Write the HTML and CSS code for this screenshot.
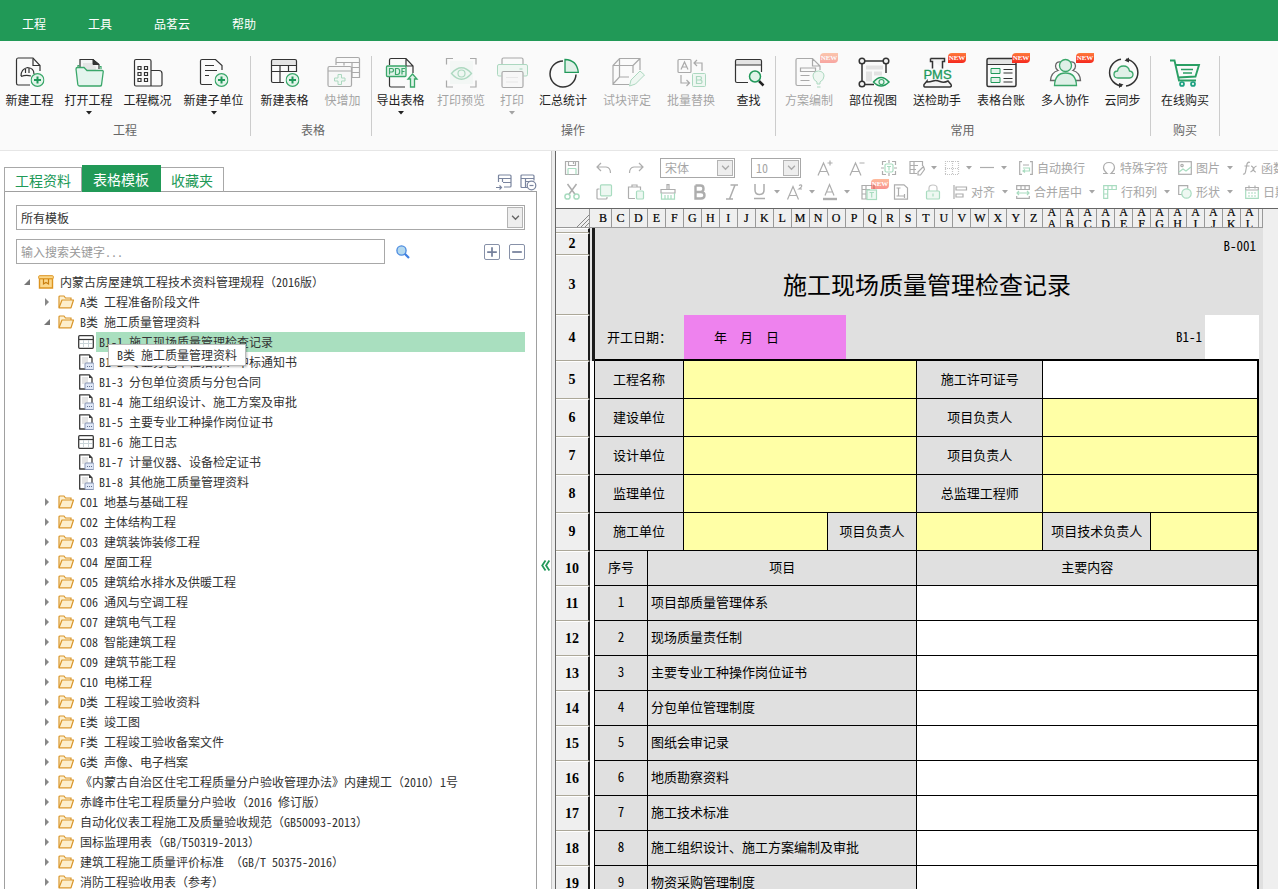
FILE: index.html
```html
<!DOCTYPE html>
<html lang="zh-CN">
<head>
<meta charset="utf-8">
<title>施工现场质量管理检查记录</title>
<link rel="stylesheet" href="styles.css">
</head>
<body>
<svg class="defs" aria-hidden="true">
  <symbol id="plus" viewBox="0 0 14 14"><circle cx="7" cy="7" r="6.400" fill="#e3f4ea" stroke="#3aa76a" stroke-width="1.2"/><path d="M7 3.500v7M3.500 7h7" stroke="#21995a" stroke-width="2"/></symbol>
  <symbol id="down" viewBox="0 0 6 4"><path d="M0 0h6L3 3.500z" fill="currentColor"/></symbol>
  <symbol id="chev" viewBox="0 0 10 7"><path d="M1 1l4 4 4-4" fill="none" stroke="currentColor" stroke-width="1.6"/></symbol>
  <symbol id="opened" viewBox="0 0 8 8"><path d="M7 1v6H1z" fill="#777"/></symbol>
  <symbol id="closed" viewBox="0 0 8 8"><path d="M2 0l4 4-4 4z" fill="#888"/></symbol>
  <symbol id="folder" viewBox="0 0 16 14"><path d="M1 12.500V2q0-1 1-1h4l1.500 2H13v2" fill="#fdf0d0" stroke="#d9962b" stroke-width="1.2"/><path d="M1 12.800L4 5h11.500L13 12.800z" fill="#fdeecb" stroke="#d9962b" stroke-width="1.2" stroke-linejoin="round"/></symbol>
  <symbol id="box" viewBox="0 0 16 14"><path d="M1.500 3.500h13V13h-13z" fill="#fbd88c" stroke="#dd9420" stroke-width="1.400"/><rect x=".7" y=".7" width="14.600" height="3" rx=".8" fill="#fbd88c" stroke="#dd9420"/><path d="M5.500 4v5L8 7.500l2.500 1.500V4" fill="none" stroke="#c97f10" stroke-width="1.200"/></symbol>
  <symbol id="doc" viewBox="0 0 16 16"><path d="M1.700.8H11L14 4v11H1.700z" fill="#fff" stroke="#3a3a3a" stroke-width="1.300" stroke-linejoin="round"/><path d="M4 3h6v7H4z" fill="#e4e4e4"/><path d="M11 .8V4h3z" fill="#3a3a3a"/><rect x="7" y="9" width="9" height="6.500" rx="1" fill="#dfe7f5" stroke="#8795b5"/><path d="M9 12.500h1m1 0h1m1 0h1" stroke="#5f6f94" stroke-width="1.200"/></symbol>
  <symbol id="form" viewBox="0 0 16 14"><rect x=".7" y=".7" width="14.600" height="12.600" rx="1" fill="#fff" stroke="#3a3a3a" stroke-width="1.300"/><path d="M1 4.500h14" stroke="#3a3a3a" stroke-width="1.200"/><path d="M2 8.500h12M5.500 5v7.500M10.500 5v7.500" stroke="#c9d4d8"/></symbol>
</svg>
<div class="app">
  <header class="menubar">
    <nav class="menu"><a href="#">工程</a><a href="#">工具</a><a href="#">品茗云</a><a href="#">帮助</a></nav>
  </header>

  <div class="ribbon">
    <section class="group g1">
      <div class="btns">
        <button class="rb compact"><svg viewBox="0 0 32 32"><path d="M26 15V9.500L19 2H4Q2.500 2 2.500 4v23q0 2 1.500 2h12" class="k"/><path d="M19 2.500V9.500h7" class="k"/><path d="M7 20q0-7 6.500-8.500Q20 12 20 18M7 20.500q5-2 10-.5M11.500 12v5M15 12v5" class="k"/><use href="#plus" x="16.500" y="17" width="14" height="14"/></svg><span>新建工程</span></button>
        <button class="rb compact"><svg viewBox="0 0 32 32"><path d="M7 12V3.500h13L26 8.500V13" class="k" fill="#fff"/><path d="M10 7h9l4 4v4H10z" fill="#e4e4e4"/><path d="M20 3.500v5h6z" fill="#333" stroke="#333"/><path d="M5 12V9.500h1.500M26.500 10.500H28V13" class="g"/><path d="M3 13q0-1.500 1.500-1.500H11l3 3h15q1.500 0 1.200 1.500L28.500 29q-.2 1-1.500 1H6.500Q5 30 4.800 28.500z" fill="#e4f5ee" stroke="#3aa76a" stroke-width="1.300"/></svg><span>打开工程</span><svg class="dn"><use href="#down"/></svg></button>
        <button class="rb compact"><svg viewBox="0 0 32 32"><path d="M2.500 5q0-1.500 1.500-1.500h13.500q1.500 0 1.500 1.500v25H4q-1.500 0-1.500-1.500zM19 14.500h8q3 0 3 3v11q0 1.500-1.500 1.500H19" class="k"/><path d="M6 10.500h3v3H6zM12.500 10.500h3v3h-3zM6 16.500h3v3H6zM12.500 16.500h3v3h-3zM6 22.500h3v3H6zM12.500 22.500h3v3h-3z" class="k"/></svg><span>工程概况</span></button>
        <button class="rb w5"><svg viewBox="0 0 32 32"><path d="M14 28.500H4q-1.500 0-1.500-1.500V5q0-1.500 1.500-1.500h13.500l6.500 6V14M7 9.500h9M7 14.500h12M7 19.500h4" class="k"/><use href="#plus" x="16.500" y="17" width="14" height="14"/></svg><span>新建子单位</span><svg class="dn"><use href="#down"/></svg></button>
      </div><h2>工程</h2>
    </section>
    <section class="group g2">
      <div class="btns">
        <button class="rb compact"><svg viewBox="0 0 32 32"><path d="M3 4h24v5H3z" fill="#e4e4e4"/><path d="M15 26.500H4q-1.500 0-1.500-1.500V5q0-1.500 1.500-1.500h22q1.500 0 1.500 1.500v11M2.500 9.500h25M2.500 15.500h25M11 9.500v17M19.500 9.500v6" class="k"/><use href="#plus" x="16.500" y="17" width="14" height="14"/></svg><span>新建表格</span></button>
        <button class="rb w4" disabled><svg viewBox="0 0 32 32"><path d="M9 9V3q0-1.500 1.500-1.500H31q1.500 0 1.500 1.500v18.500H25M9 6.500h23M25 11.500h7M25 16.500h7M17 6.500v3M25 6.500v15" class="k"/><path d="M1 12q0-1.500 1.500-1.500H23q1.500 0 1.500 1.500v17q0 1.500-1.500 1.500H2.500Q1 30.500 1 29zM1 15h23" class="k" fill="#fff"/><path d="M11 18.500h3.500V22H18v3h-3.500v3.500H11V25H7.500v-3H11z" fill="#dff3e8" stroke="#3aa76a"/></svg><span>快增加</span></button>
      </div><h2>表格</h2>
    </section>
    <section class="group g3">
      <div class="btns">
        <button class="rb w4"><svg viewBox="0 0 32 32"><path d="M4.500 9V4q0-1.500 1.500-1.500h15L28 10v7M4.500 21v8.500q0 1.500 1.500 1.500h14M21 2.500V10h7" class="k"/><rect x="1.500" y="10" width="19.500" height="10.500" rx="1" fill="#dff3e8" stroke="#3aa76a" stroke-width="1.300"/><path d="M4.500 18.500v-6H7q1.500 0 1.500 1.700T7 16H4.500M10.500 12.500h2q2.200 0 2.200 3t-2.200 3h-2zM17 18.500v-6h3M17 15.500h2.500" class="g"/><path d="M27.500 18l4.500 5h-2.500v8h-4v-8H23z" fill="#dff3e8" stroke="#3aa76a" stroke-width="1.300"/></svg><span>导出表格</span><svg class="dn"><use href="#down"/></svg></button>
        <button class="rb" disabled><svg viewBox="0 0 32 32"><path d="M5 5h23v23H5z" fill="#e9f4ee"/><path d="M1.500 8.500v-6H8M25 2.500h6v6M31 24.500V31h-6M8 31H1.500v-6.500" class="k"/><path d="M6.500 17.500Q16.500 6 26.500 17.500 16.500 29 6.500 17.500z" fill="#dff3e8" stroke="#3aa76a" stroke-width="1.300"/><circle cx="16.500" cy="17.500" r="3.500" class="g"/></svg><span>打印预览</span></button>
        <button class="rb w2" disabled><svg viewBox="0 0 32 32"><path d="M6 9V3.500Q6 2 7.500 2h18Q27 2 27 3.500V9" class="k"/><path d="M5.500 20H3q-1.500 0-1.500-1.500V10Q1.500 8.500 3 8.500h27q1.500 0 1.500 1.500v8.500Q31.500 20 30 20h-2.500" fill="#dff3e8" stroke="#3aa76a"/><path d="M23.500 13h3" class="g"/><path d="M6 17q0-1.500 1.500-1.500h18q1.500 0 1.500 1.500v13q0 1.500-1.500 1.500h-18Q6 31.500 6 30z" class="k" fill="#fff"/><path d="M10 21.500h12M10 26h12" stroke="#ccc"/></svg><span>打印</span><svg class="dn"><use href="#down"/></svg></button>
        <button class="rb"><svg viewBox="0 0 32 32"><path d="M16 5A13 13 0 1 0 29 18.500" class="k m"/><path d="M18 3.500Q30 4 31.300 16.300H18z" fill="#dff0e7" stroke="#21995a" stroke-width="1.300"/></svg><span>汇总统计</span></button>
        <button class="rb" disabled><svg viewBox="0 0 32 32"><path d="M18 28.500H2V9.500L8.500 2.500H29V14M2 9.500h20V17M22 9.500L29 2.500M8.500 2.500V21L2 28M8.500 21H18" class="k"/><path d="M18.500 30l1.500-6 9-9 4.500 4-9 9z" fill="#dff3e8" stroke="#3aa76a"/></svg><span>试块评定</span></button>
        <button class="rb" disabled><svg viewBox="0 0 32 32"><rect x="3" y="3.500" width="13" height="13" rx="1" class="k"/><path d="M6 13.500L9.500 6l3.500 7.500M7 11h5" class="k"/><rect x="17.500" y="17.500" width="13" height="13" rx="1" fill="#dff3e8" stroke="#3aa76a"/><path d="M21.500 27.500v-7h3q2 0 2 1.700T24.500 24h-3 3.500q2 0 2 1.800t-2 1.700z" class="g"/><path d="M19 7h8v8M22 4l-3 3 3 3M6 19v8h8M11.500 24l3 3-3 3" class="k"/></svg><span>批量替换</span></button>
        <button class="rb w3"><svg viewBox="0 0 32 32"><path d="M3 4h25v5H3z" fill="#e4e4e4"/><path d="M15 26.500H4q-1.500 0-1.500-1.500V5q0-1.500 1.500-1.500h23q1.500 0 1.500 1.500v11M2.500 9h26" class="k"/><path d="M26 25l4.500 4.500" stroke="#222" stroke-width="2.500"/><circle cx="22" cy="20.500" r="5.500" fill="#dff3e8" stroke="#21995a" stroke-width="1.500"/></svg><span>查找</span></button>
      </div><h2>操作</h2>
    </section>
    <section class="group g4">
      <div class="btns">
        <button class="rb" disabled><svg viewBox="0 0 32 32"><path d="M18 29.500H4.500Q3 29.500 3 28V4q0-1.500 1.500-1.500h15L27 10v4M19.500 2.500V10H27M7.500 12h15v3.500h-15zM7.500 19.500h9M7.500 24.500h9" class="k"/><path d="M24 28v-2q-4-2-4-6 0-4.500 5.500-5 5.500.5 5.500 5 0 4-4 6v2zM24 31h3.500" fill="#dff3e8" stroke="#3aa76a"/></svg><span>方案编制</span><b class="new">NEW</b></button>
        <button class="rb"><svg viewBox="0 0 32 32"><path d="M9 9.500h17v4H9zM9 15.500h6v10H9zM17 15.500h8v4h-8z" fill="#e2e2e2"/><path d="M8 5h18M5 8v17M8 28.500h9M29 8v9" class="k m"/><g class="k m" fill="#e4e4e4"><circle cx="5" cy="5" r="2.800"/><circle cx="29" cy="5" r="2.800"/><circle cx="5" cy="28" r="2.800"/></g><path d="M16.500 26q7.500-9 15.500 0-8 8-15.500 0z" fill="#eaf7f0" stroke="#21995a" stroke-width="1.500"/><circle cx="24.500" cy="26" r="2.500" class="g"/></svg><span>部位视图</span></button>
        <button class="rb"><svg viewBox="0 0 32 32"><path d="M9.500 2.500h14v3h-2v7M9.500 2.500v3h2v7M6 25l-3 3.500q-.5 2.500 1 2.500h25q2-.500 1-2.500L27 25q-4 2-8 .5T12 25q-3 1-6 1z" class="k m" fill="#e6e6e6"/><text x="16.500" y="23" text-anchor="middle" class="pms">PMS</text></svg><span>送检助手</span><b class="new">NEW</b></button>
        <button class="rb"><svg viewBox="0 0 32 32"><path d="M2 3h29v5H2z" fill="#e4e4e4"/><rect x="2" y="2.500" width="29" height="28" rx="1.500" class="k m"/><path d="M2 8.500h29M18.500 13.500h9M18.500 17h9M18.500 22.500h9M18.500 26h9" class="k"/><path d="M6 12.500h9v5H6zM6 21.500h9v5H6z" fill="#e3f4ea" stroke="#21995a"/></svg><span>表格台账</span><b class="new">NEW</b></button>
        <button class="rb"><svg viewBox="0 0 32 32"><path d="M12 6q-5-1-5.500 4 0 3 2.500 4.500-7 2-7.500 10H7M21 6q5-1 5.500 4 0 3-2.500 4.500 7 2 7.500 10H26" fill="none" stroke="#666" stroke-width="1.300"/><circle cx="16.500" cy="9.500" r="6" fill="#dff0e7" stroke="#3aa76a" stroke-width="1.300"/><path d="M5.500 29.500Q6 17 16.500 17t11 12.500z" fill="#dff0e7" stroke="#3aa76a" stroke-width="1.300"/></svg><span>多人协作</span><b class="new">NEW</b></button>
        <button class="rb w3"><svg viewBox="0 0 32 32"><path d="M14 3.200A13.500 13.500 0 0 0 15 30M19 30A13.500 13.500 0 0 0 19 3.200" class="k m"/><path d="M17.500 4.500L22 1.500v5zM16.500 28.500L12 27v5z" fill="#333"/><path d="M11 22q-4 0-4-3.500T10.500 15q1-5 6-5t6 5q3.500.5 3.500 3.500T22.500 22z" fill="#dff0e7" stroke="#3aa76a" stroke-width="1.300"/></svg><span>云同步</span></button>
      </div><h2>常用</h2>
    </section>
    <section class="group g5">
      <div class="btns">
        <button class="rb"><svg viewBox="0 0 32 32"><path d="M1 4.500h4.500L10 24.500h17M6.500 9H30l-3.500 11.500-17.500 1" fill="none" stroke="#2a9f64" stroke-width="1.900"/><path d="M12 13.500h12M14 17h9" stroke="#2a9f64" stroke-width="1.500"/><g fill="#dff3e8" stroke="#1a9f80" stroke-width="1.700"><circle cx="13" cy="28" r="2"/><circle cx="24" cy="28" r="2"/></g></svg><span>在线购买</span></button>
      </div><h2>购买</h2>
    </section>
  </div>

  <main class="work">
    <aside class="side">
      <div class="tabs">
        <button class="tab">工程资料</button><button class="tab on">表格模板</button><button class="tab">收藏夹</button>
        <div class="tabtools">
          <button aria-label="导入"><svg viewBox="0 0 17 17"><path d="M3.500 8V2q0-1 1-1H15q1 0 1 1v10q0 1-1 1H9M3.500 4.500H16M8 8.500h8M7.500 4.500v3.500M1 13.500h5.500M4.500 11.500l2 2-2 2" class="s"/></svg></button>
          <button aria-label="移除"><svg viewBox="0 0 17 17"><path d="M7 13.500H2q-1 0-1-1V2q0-1 1-1h11q1 0 1 1v4.500M1 4.500h13M5.500 4.500v9M5.500 7.500H9" class="s"/><circle cx="11.500" cy="11.500" r="4.300" class="s"/><path d="M9.500 11.500h4" class="s"/></svg></button>
        </div>
      </div>
      <div class="panel">
        <div class="combo big"><select aria-label="模板"><option>所有模板</option></select><span class="drop"><svg viewBox="0 0 10 7"><use href="#chev"/></svg></span></div>
        <div class="search">
          <input type="text" aria-label="搜索" placeholder="输入搜索关键字...">
          <button class="find" aria-label="查询"><svg viewBox="0 0 14 14"><path d="M8.500 8.500l4.500 4.500" stroke="#3f7fe0" stroke-width="2.200"/><circle cx="5.500" cy="5.500" r="4.600" fill="#b5d9ee" stroke="#4a8ae0" stroke-width="1.300"/></svg></button>
          <button class="pm" aria-label="展开"><svg viewBox="0 0 16 16"><path d="M8 2.500v11M2.500 8h11" stroke="#76819c" stroke-width="2"/></svg></button>
          <button class="pm" aria-label="折叠"><svg viewBox="0 0 16 16"><path d="M2.500 8h11" stroke="#76819c" stroke-width="2"/></svg></button>
        </div>
        <ul class="tree">
          <li><div class="row"><svg class="ar"><use href="#opened"/></svg><svg class="ic"><use href="#box"/></svg><span>内蒙古房屋建筑工程技术资料管理规程<i class="f">（</i>2016版<i class="f">）</i></span></div>
          <ul>
            <li><div class="row"><svg class="ar"><use href="#closed"/></svg><svg class="ic"><use href="#folder"/></svg><span>A类 工程准备阶段文件</span></div></li>
            <li class="hint"><div class="row"><svg class="ar"><use href="#opened"/></svg><svg class="ic"><use href="#folder"/></svg><span>B类 施工质量管理资料</span></div>
              <div class="tip" role="tooltip">B类 施工质量管理资料</div>
              <ul>
                <li><div class="row leaf sel"><svg class="ic"><use href="#form"/></svg><span><i>B1-1</i>施工现场质量管理检查记录</span></div></li>
                <li><div class="row leaf"><svg class="ic"><use href="#doc"/></svg><span><i>B1-2</i>专业分包单位招标、中标通知书</span></div></li>
                <li><div class="row leaf"><svg class="ic"><use href="#doc"/></svg><span><i>B1-3</i>分包单位资质与分包合同</span></div></li>
                <li><div class="row leaf"><svg class="ic"><use href="#doc"/></svg><span><i>B1-4</i>施工组织设计、施工方案及审批</span></div></li>
                <li><div class="row leaf"><svg class="ic"><use href="#doc"/></svg><span><i>B1-5</i>主要专业工种操作岗位证书</span></div></li>
                <li><div class="row leaf"><svg class="ic"><use href="#form"/></svg><span><i>B1-6</i>施工日志</span></div></li>
                <li><div class="row leaf"><svg class="ic"><use href="#doc"/></svg><span><i>B1-7</i>计量仪器、设备检定证书</span></div></li>
                <li><div class="row leaf"><svg class="ic"><use href="#doc"/></svg><span><i>B1-8</i>其他施工质量管理资料</span></div></li>
              </ul></li>
            <li><div class="row"><svg class="ar"><use href="#closed"/></svg><svg class="ic"><use href="#folder"/></svg><span><i class="c">C01</i>地基与基础工程</span></div></li>
            <li><div class="row"><svg class="ar"><use href="#closed"/></svg><svg class="ic"><use href="#folder"/></svg><span><i class="c">C02</i>主体结构工程</span></div></li>
            <li><div class="row"><svg class="ar"><use href="#closed"/></svg><svg class="ic"><use href="#folder"/></svg><span><i class="c">C03</i>建筑装饰装修工程</span></div></li>
            <li><div class="row"><svg class="ar"><use href="#closed"/></svg><svg class="ic"><use href="#folder"/></svg><span><i class="c">C04</i>屋面工程</span></div></li>
            <li><div class="row"><svg class="ar"><use href="#closed"/></svg><svg class="ic"><use href="#folder"/></svg><span><i class="c">C05</i>建筑给水排水及供暖工程</span></div></li>
            <li><div class="row"><svg class="ar"><use href="#closed"/></svg><svg class="ic"><use href="#folder"/></svg><span><i class="c">C06</i>通风与空调工程</span></div></li>
            <li><div class="row"><svg class="ar"><use href="#closed"/></svg><svg class="ic"><use href="#folder"/></svg><span><i class="c">C07</i>建筑电气工程</span></div></li>
            <li><div class="row"><svg class="ar"><use href="#closed"/></svg><svg class="ic"><use href="#folder"/></svg><span><i class="c">C08</i>智能建筑工程</span></div></li>
            <li><div class="row"><svg class="ar"><use href="#closed"/></svg><svg class="ic"><use href="#folder"/></svg><span><i class="c">C09</i>建筑节能工程</span></div></li>
            <li><div class="row"><svg class="ar"><use href="#closed"/></svg><svg class="ic"><use href="#folder"/></svg><span><i class="c">C10</i>电梯工程</span></div></li>
            <li><div class="row"><svg class="ar"><use href="#closed"/></svg><svg class="ic"><use href="#folder"/></svg><span>D类 工程竣工验收资料</span></div></li>
            <li><div class="row"><svg class="ar"><use href="#closed"/></svg><svg class="ic"><use href="#folder"/></svg><span>E类 竣工图</span></div></li>
            <li><div class="row"><svg class="ar"><use href="#closed"/></svg><svg class="ic"><use href="#folder"/></svg><span>F类 工程竣工验收备案文件</span></div></li>
            <li><div class="row"><svg class="ar"><use href="#closed"/></svg><svg class="ic"><use href="#folder"/></svg><span>G类 声像、电子档案</span></div></li>
            <li><div class="row"><svg class="ar"><use href="#closed"/></svg><svg class="ic"><use href="#folder"/></svg><span>《内蒙古自治区住宅工程质量分户验收管理办法》内建规工<i class="f">（</i>2010<i class="f">）</i>1号</span></div></li>
            <li><div class="row"><svg class="ar"><use href="#closed"/></svg><svg class="ic"><use href="#folder"/></svg><span>赤峰市住宅工程质量分户验收<i class="f">（</i>2016 修订版<i class="f">）</i></span></div></li>
            <li><div class="row"><svg class="ar"><use href="#closed"/></svg><svg class="ic"><use href="#folder"/></svg><span>自动化仪表工程施工及质量验收规范<i class="f">（</i>GB50093-2013<i class="f">）</i></span></div></li>
            <li><div class="row"><svg class="ar"><use href="#closed"/></svg><svg class="ic"><use href="#folder"/></svg><span>国标监理用表<i class="f">（</i>GB/T50319-2013<i class="f">）</i></span></div></li>
            <li><div class="row"><svg class="ar"><use href="#closed"/></svg><svg class="ic"><use href="#folder"/></svg><span>建筑工程施工质量评价标准 <i class="f">（</i>GB/T 50375-2016<i class="f">）</i></span></div></li>
            <li><div class="row"><svg class="ar"><use href="#closed"/></svg><svg class="ic"><use href="#folder"/></svg><span>消防工程验收用表<i class="f">（</i>参考<i class="f">）</i></span></div></li>
          </ul></li>
        </ul>
      </div>
    </aside>
    <div class="splitter"><button aria-label="收起"><svg viewBox="0 0 8 10"><path d="M4 .5L1 5l3 4.500M7.500.5l-3 4.500 3 4.500" fill="none" stroke="#21995a" stroke-width="1.600"/></svg></button></div>

    <section class="editor">
      <div class="tools">
        <div class="line">
          <button class="t" aria-label="保存"><svg viewBox="0 0 16 16"><path d="M1.500 1.500h13v13h-13zM4.500 1.500v4h7v-4M9.500 2v2" class="d"/><path d="M4 14.500V9q0-.5.500-.5h7q.5 0 .5.500v5.500" class="e"/></svg></button>
          <button class="t" aria-label="撤销"><svg viewBox="0 0 16 16"><path d="M5 3L1 7l4 4M1.500 7H10q4.500.5 4.500 6" class="d"/></svg></button>
          <button class="t" aria-label="重做"><svg viewBox="0 0 16 16"><path d="M11 3l4 4-4 4M14.500 7H6q-4.500.5-4.500 6" class="d"/></svg></button>
          <div class="combo font"><select aria-label="字体"><option>宋体</option></select><span class="drop"><svg viewBox="0 0 10 7"><use href="#chev"/></svg></span></div>
          <div class="combo size"><select aria-label="字号"><option>10</option></select><span class="drop"><svg viewBox="0 0 10 7"><use href="#chev"/></svg></span></div>
          <button class="t" aria-label="增大字号"><svg viewBox="0 0 16 16"><path d="M1 15.500L6.500 3 12 15.500M3 11.500h7M13 .5v5M10.500 3h5" class="d"/></svg></button>
          <button class="t" aria-label="减小字号"><svg viewBox="0 0 16 16"><path d="M1 15.500L6.500 3 12 15.500M3 11.500h7M10.500 3h5" class="d"/></svg></button>
          <button class="t" aria-label="适应"><svg viewBox="0 0 16 16"><path d="M1.500 5V1.500H5M11 1.500h3.500V5M14.500 11v3.500H11M5 14.500H1.500V11M8 0v3M8 13v3M0 8h3M13 8h3" class="d"/><rect x="4" y="4" width="8" height="8" rx="1.500" class="e"/><path d="M6 6.500h4M8 6.500v4" class="e"/></svg></button>
          <button class="t dd" aria-label="边框画笔"><svg viewBox="0 0 16 16"><path d="M8 13.500H1v-12h12.500V6M1 5.500h8M1 9.500h6M5 1.500v12M14.500 6.500L9 12v3h2.500l4-5.500z" class="d"/></svg><svg class="dn"><use href="#down"/></svg></button>
          <button class="t dd" aria-label="边框"><svg viewBox="0 0 16 16"><path d="M1 1.500h14M1 8.500h14M1 14.500h14M1.500 1v14M8.500 1v14M14.500 1v14" class="d pale" stroke-dasharray="1 1"/></svg><svg class="dn"><use href="#down"/></svg></button>
          <button class="t dd" aria-label="线型"><svg viewBox="0 0 16 16"><path d="M1 7.500h14" class="d"/></svg><svg class="dn"><use href="#down"/></svg></button>
          <button class="t tx wide"><svg viewBox="0 0 14 14"><path d="M3 .7H.7v12.600H3M11 .7h2.300v12.600H11M4 4h6" class="d"/><path d="M4 7h6.500v3H4M6 8.500L4 10l2 1.500" class="e"/></svg>自动换行</button>
          <button class="t tx wide"><svg viewBox="0 0 14 14"><path d="M1 12.500h4Q1.500 9.500 1.500 6.500 2 1.500 7 1.500t5.500 5q0 3-3.500 6h4" class="d"/></svg>特殊字符</button>
          <button class="t tx wide"><svg viewBox="0 0 14 14"><rect x=".7" y=".7" width="12.600" height="12.600" class="d"/><circle cx="4" cy="4.500" r="1.200" class="d"/><path d="M1 11l4-3 3 2 5-4" class="e"/></svg>图片<svg class="dn"><use href="#down"/></svg></button>
          <button class="t tx wide"><svg viewBox="0 0 14 14"><path d="M0 13q2 .5 2.500-2L4 3Q5 .5 7 1.500M1.500 5h5M8 5q2 0 2.500 3T13 11M13.500 5Q11 6 10.500 8T7.500 11" class="d"/></svg>函数</button>
        </div>
        <div class="line">
          <button class="t" aria-label="剪切"><svg viewBox="0 0 16 16"><path d="M3.500 0l8 11M12.500 0l-8 11" class="d m"/><circle cx="3.500" cy="12.500" r="2.600" class="e m"/><circle cx="12.500" cy="12.500" r="2.600" class="e m"/></svg></button>
          <button class="t" aria-label="复制"><svg viewBox="0 0 16 16"><path d="M3.500 5H2Q1 5 1 6v8q0 1 1 1h8q1 0 1-1v-1" class="d"/><rect x="4.500" y=".8" width="11" height="11" rx="1" class="e tint"/></svg></button>
          <button class="t" aria-label="粘贴"><svg viewBox="0 0 16 16"><path d="M7 14.500H1q-.5 0-.5-.5V3h12v3M4 3V1h5v2" class="d"/><rect x="8.500" y="7" width="7" height="8" rx="1" class="e tint"/></svg></button>
          <button class="t" aria-label="格式刷"><svg viewBox="0 0 16 16"><path d="M7 5V.7h2V5M1 9V5.500h14V9z" class="d"/><path d="M1.500 9v6.200h13V9M5 15v-4M8 15v-4M11 15v-4" class="e"/></svg></button>
          <button class="t" aria-label="加粗"><svg viewBox="0 0 16 16"><path d="M3.500 1.500V14.500h5.500q3.500 0 3.500-3.200T9 8H3.500M3.500 1.500H8.500q3 0 3 3.200T8.500 8" class="d h"/></svg></button>
          <button class="t" aria-label="斜体"><svg viewBox="0 0 16 16"><path d="M6.500 1H14M2 15h7M11 1L5.500 15" class="d m"/></svg></button>
          <button class="t dd" aria-label="下划线"><svg viewBox="0 0 16 16"><path d="M3 0v6q0 4.500 4.500 4.500T12 6V0M2 14.500h11" class="d m"/></svg><svg class="dn"><use href="#down"/></svg></button>
          <button class="t dd" aria-label="上标"><svg viewBox="0 0 16 16"><path d="M.5 15.500L6 2.500l5.500 13M2.500 11.500h7M12 1.500q2.500-1.500 2.800.5 0 1-2.800 3h3" class="d"/></svg><svg class="dn"><use href="#down"/></svg></button>
          <button class="t dd" aria-label="字体颜色"><svg viewBox="0 0 16 16"><path d="M3 11.500L7.500.5 12 11.500M4.500 8h6" class="d"/><path d="M1 15h14" class="d h"/></svg><svg class="dn"><use href="#down"/></svg></button>
          <button class="t" aria-label="表格文字"><svg viewBox="0 0 16 16"><path d="M6 15H1V1.500h12V5M1 5.500h8M1 10h4M5 1.500V15" class="d"/><rect x="6" y="6" width="9.500" height="9.500" class="e tint"/><path d="M8.500 8.500h4.500M10.700 8.500v5" class="e"/></svg><b class="new">NEW</b></button>
          <button class="t" aria-label="页面"><svg viewBox="0 0 16 16"><path d="M1.500.8H11L14.500 4v11.200h-13zM3.500 4h4M5.500 4v8M3.500 12h8M11.500 10v4" class="d"/></svg></button>
          <button class="t" aria-label="锁定"><svg viewBox="0 0 16 16"><path d="M4 7V4q0-3 4-3t4 3v3" class="d pale"/><rect x="1.500" y="7" width="13" height="8" rx="1" class="e tint"/><path d="M8 9.500v3" class="e"/></svg></button>
          <button class="t tx"><svg viewBox="0 0 14 14"><path d="M1 0v14M3 2h10.500v3H3zM3 9h7v3H3z" class="d"/></svg>对齐<svg class="dn"><use href="#down"/></svg></button>
          <button class="t tx"><svg viewBox="0 0 14 14"><path d="M.7 4.500V.7h12.600v3.800zM5 .7v3.800M9 .7v3.800M.7 11v2.300h12.600V11" class="d"/><path d="M.7 8h12.600M3 6L1 8l2 2M11 6l2 2-2 2" class="e"/></svg>合并居中<svg class="dn"><use href="#down"/></svg></button>
          <button class="t tx"><svg viewBox="0 0 14 14"><path d="M.7 4.500V.7h12.600v3.800zM5 .7v3.800M9 .7v3.800" class="e"/><path d="M.7 5v8.300h4V5M.7 9h4" class="e"/></svg>行和列<svg class="dn"><use href="#down"/></svg></button>
          <button class="t tx"><svg viewBox="0 0 14 14"><path d="M4 9.500H.7V.7h9v3" class="d"/><circle cx="8.500" cy="8.500" r="4.700" class="e tint"/></svg>形状<svg class="dn"><use href="#down"/></svg></button>
          <button class="t tx date"><svg viewBox="0 0 14 14"><path d="M.7 5V2.500h12.600V5zM4 .5v3M10 .5v3" class="d"/><path d="M.7 5v8.300h12.600V5M3 8h2M6 8h2M9 8h2M3 11h2M6 11h2M9 11h2" class="e"/></svg>日期</button>
        </div>
      </div>

      <div class="sheetwrap">
      <table class="sheet">
        <colgroup><col class="cn"><col class="cg"><col class="cb"><col span="36"><col class="ce"></colgroup>
        <thead><tr class="heads"><th class="corner"><svg viewBox="0 0 12 12"><path d="M0 12L12 0M4 12l8-8M8 12l4-4" stroke="#888"/></svg></th><th></th><th>B</th><th>C</th><th>D</th><th>E</th><th>F</th><th>G</th><th>H</th><th>I</th><th>J</th><th>K</th><th>L</th><th>M</th><th>N</th><th>O</th><th>P</th><th>Q</th><th>R</th><th>S</th><th>T</th><th>U</th><th>V</th><th>W</th><th>X</th><th>Y</th><th>Z</th><th><div>A<br>A</div></th><th><div>A<br>B</div></th><th><div>A<br>C</div></th><th><div>A<br>D</div></th><th><div>A<br>E</div></th><th><div>A<br>F</div></th><th><div>A<br>G</div></th><th><div>A<br>H</div></th><th><div>A<br>I</div></th><th><div>A<br>J</div></th><th><div>A<br>K</div></th><th><div>A<br>L</div></th><th></th></tr></thead>
        <tbody class="top">
          <tr class="r1"><th></th><td class="gap"></td><td colspan="37"></td><td></td></tr>
          <tr class="r2"><th>2</th><td class="gap"></td><td colspan="37" class="code">B-001</td><td></td></tr>
          <tr class="r3"><th>3</th><td class="gap"></td><td colspan="37" class="title">施工现场质量管理检查记录</td><td></td></tr>
          <tr class="r4"><th>4</th><td class="gap"></td><td colspan="5">开工日期：</td><td colspan="9" class="pink">年　月　日</td><td colspan="20" class="code">B1-1</td><td colspan="3" class="w"></td><td></td></tr>
        </tbody>
        <tbody class="info">
          <tr><th>5</th><td class="gap"></td><td colspan="5">工程名称</td><td colspan="13" class="y"></td><td colspan="7">施工许可证号</td><td colspan="12" class="w end"></td><td class="edge"></td></tr>
          <tr><th>6</th><td class="gap"></td><td colspan="5">建设单位</td><td colspan="13" class="y"></td><td colspan="7">项目负责人</td><td colspan="12" class="y end"></td><td class="edge"></td></tr>
          <tr><th>7</th><td class="gap"></td><td colspan="5">设计单位</td><td colspan="13" class="y"></td><td colspan="7">项目负责人</td><td colspan="12" class="y end"></td><td class="edge"></td></tr>
          <tr><th>8</th><td class="gap"></td><td colspan="5">监理单位</td><td colspan="13" class="y"></td><td colspan="7">总监理工程师</td><td colspan="12" class="y end"></td><td class="edge"></td></tr>
          <tr><th>9</th><td class="gap"></td><td colspan="5">施工单位</td><td colspan="8" class="y"></td><td colspan="5">项目负责人</td><td colspan="7" class="y"></td><td colspan="6">项目技术负责人</td><td colspan="6" class="y end"></td><td class="edge"></td></tr>
        </tbody>
        <tbody class="list">
          <tr><th>10</th><td class="gap"></td><td colspan="3">序号</td><td colspan="15">项目</td><td colspan="19" class="end">主要内容</td><td class="edge"></td></tr>
          <tr><th>11</th><td class="gap"></td><td colspan="3">1</td><td colspan="15" class="l">项目部质量管理体系</td><td colspan="19" class="w end"></td><td class="edge"></td></tr>
          <tr><th>12</th><td class="gap"></td><td colspan="3">2</td><td colspan="15" class="l">现场质量责任制</td><td colspan="19" class="w end"></td><td class="edge"></td></tr>
          <tr><th>13</th><td class="gap"></td><td colspan="3">3</td><td colspan="15" class="l">主要专业工种操作岗位证书</td><td colspan="19" class="w end"></td><td class="edge"></td></tr>
          <tr><th>14</th><td class="gap"></td><td colspan="3">4</td><td colspan="15" class="l">分包单位管理制度</td><td colspan="19" class="w end"></td><td class="edge"></td></tr>
          <tr><th>15</th><td class="gap"></td><td colspan="3">5</td><td colspan="15" class="l">图纸会审记录</td><td colspan="19" class="w end"></td><td class="edge"></td></tr>
          <tr><th>16</th><td class="gap"></td><td colspan="3">6</td><td colspan="15" class="l">地质勘察资料</td><td colspan="19" class="w end"></td><td class="edge"></td></tr>
          <tr><th>17</th><td class="gap"></td><td colspan="3">7</td><td colspan="15" class="l">施工技术标准</td><td colspan="19" class="w end"></td><td class="edge"></td></tr>
          <tr><th>18</th><td class="gap"></td><td colspan="3">8</td><td colspan="15" class="l">施工组织设计、施工方案编制及审批</td><td colspan="19" class="w end"></td><td class="edge"></td></tr>
          <tr><th>19</th><td class="gap"></td><td colspan="3">9</td><td colspan="15" class="l">物资采购管理制度</td><td colspan="19" class="w end"></td><td class="edge"></td></tr>
        </tbody>
      </table>
      </div>
    </section>
  </main>
</div>
</body>
</html>
```
FILE: styles.css
```css
* { box-sizing: border-box; }
body {
  margin: 0;
  font: 12px/16px "Noto Sans CJK SC", sans-serif;
  font-feature-settings: "hwid";
  color: #333;
  background: #fff;
}
button, select, input {
  font: inherit;
  font-feature-settings: inherit;
  color: inherit;
  margin: 0;
  padding: 0;
  border: 0;
  background: none;
  border-radius: 0;
}
ul { list-style: none; margin: 0; padding: 0; }
svg { display: block; flex: none; overflow: visible; }
i { font-style: normal; }
.defs { width: 0; height: 0; position: absolute; }
.k { fill: none; stroke: #333; stroke-width: 1.2; }
path.k[fill], g.k[fill] { fill: #f4f4f4; }
.g { fill: none; stroke: #3aa76a; stroke-width: 1.2; }
.s { fill: none; stroke: #7a859f; stroke-width: 1.2; }
.d { fill: none; stroke: #adadad; stroke-width: 1.2; }
.e { fill: none; stroke: #a9dcc0; stroke-width: 1.2; }
.m { stroke-width: 1.5; }
.h { stroke-width: 2.4; }
.pale { stroke: #c4c4c4; }
.tint { fill: #eef8f2; }

.app { display: flex; flex-direction: column; height: 100vh; overflow: hidden; }

/* Menu bar */
.menubar { flex: none; height: 41px; padding: 0 22px; background: #219957; display: flex; align-items: center; }
.menu { display: flex; gap: 42px; padding-top: 6px; }
.menu a { color: #fff; text-decoration: none; }

/* Ribbon */
.ribbon { flex: none; display: flex; height: 110px; padding-top: 15px; background: #fafafa; border-bottom: 1px solid #e6e6e6; }
.group { flex: none; display: flex; flex-direction: column; justify-content: space-between; height: 80px; border-right: 1px solid #ccc; }
.g2 { padding-left: 4px; }
.g3 { padding-right: 1px; }
.g4 { padding: 0 2px 0 1px; }
.g5 { padding: 0 2px; }
.btns { display: flex; }
.group h2 { margin: 0 0 -2px; font-size: 12px; font-weight: 400; line-height: 16px; text-align: center; color: #666; }
.rb { position: relative; width: 64px; display: flex; flex-direction: column; align-items: center; white-space: nowrap; color: #222; }
.rb > svg:first-child { width: 32px; height: 32px; margin-bottom: 4px; }
.rb.compact { width: 59px; }
.rb.w5 { width: 73px; }
.rb.w4 { width: 57px; }
.rb.w3 { width: 51px; }
.rb.w2 { width: 38px; }
.rb:disabled { opacity: .4; }
.dn { width: 6px; height: 4px; }
.rb .dn { margin-top: 3px; }
.new {
  position: absolute;
  top: -3px;
  left: calc(50% + 11px);
  width: 18px;
  height: 10px;
  border-radius: 4px 0 4px 0;
  background: linear-gradient(#ff7a3c, #f5281e);
  color: #fff;
  font: bold 7px/10px "Liberation Serif", serif;
  text-align: center;
}
.pms { font: 13px "Liberation Sans", sans-serif; fill: #21995a; stroke: #21995a; stroke-width: .3px; }

.work { flex: 1; min-height: 0; display: flex; }

/* Left panel */
.side { width: 537px; flex: none; padding: 14px 0 0 4px; display: flex; flex-direction: column; }
.tabs { display: flex; align-items: flex-end; height: 27px; position: relative; z-index: 1; }
.tab { height: 25px; padding: 0 10px 1px; font-size: 14px; line-height: 22px; color: #219957; border: 1px solid #a8a8a8; border-bottom: 0; }
.tab + .tab { border-left: 0; }
.tab.on { height: 27px; background: #219957; color: #fff; border-color: #219957; padding: 0 11px; }
.tabtools { margin-left: auto; display: flex; gap: 8px; padding-bottom: 1px; }
.tabtools svg { width: 17px; height: 17px; }
.panel { flex: 1; min-height: 0; overflow: hidden; border: 1px solid #a0a0a0; border-bottom: 0; padding: 13px 11px 0; margin-top: -1px; }
.combo { position: relative; flex: none; display: flex; border: 1px solid #a8a8a8; }
.combo select { appearance: none; width: 100%; padding-left: 4px; }
.combo.big { height: 25px; }
.drop { position: absolute; right: 1px; top: 1px; bottom: 1px; width: 16px; display: grid; place-items: center; background: #eee; border: 1px solid #b4b4b4; pointer-events: none; color: #666; }
.drop svg { width: 9px; height: 6px; }
.search { display: flex; align-items: center; margin-top: 9px; }
.search input { flex: 1; min-width: 0; height: 25px; padding: 0 4px; border: 1px solid #a8a8a8; }
.search input::placeholder { color: #999; opacity: 1; }
.find { margin: 0 74px 0 11px; }
.find svg { width: 14px; height: 14px; }
.pm { width: 16px; height: 16px; border: 1px solid #8791a8; border-radius: 2px; display: grid; place-items: center; }
.pm + .pm { margin-left: 9px; }
.pm svg { width: 14px; height: 14px; }

/* Template tree */
.tree { margin-top: 8px; color: #333; white-space: nowrap; }
.row { display: flex; align-items: center; height: 20px; padding-left: 7px; }
.ar { width: 8px; height: 8px; margin-right: 7px; }
.ic { width: 16px; height: 14px; }
.row span { margin-left: 6px; }
.tree ul .row { padding-left: 27px; }
.tree .row.leaf { padding-left: 62px; }
.leaf .ic { height: 16px; }
.leaf span { flex: 1; margin-left: 2px; padding-left: 3px; line-height: 20px; }
.leaf i { display: inline-block; width: 30px; }
.c { display: inline-block; width: 24px; }
.f { font-feature-settings: normal; }
.sel span { background: #a9dfbf; }
.hint { position: relative; }
.tip { position: absolute; top: 32px; left: 92px; height: 22px; padding: 0 8px; line-height: 20px; background: #fff; border: 1px solid #bbb; box-shadow: 1px 1px 2px rgba(0, 0, 0, .25); }

.splitter { flex: none; width: 19px; display: flex; align-items: center; padding: 91px 6px 0 4px; border-right: 1px solid #666; background: linear-gradient(90deg, #fff 14px, #c4c4c4 14px, #c4c4c4 15px, #ededed 15px); }
.splitter svg { width: 9px; height: 11px; }

/* Editor toolbar */
.editor { flex: 1; min-width: 0; display: flex; flex-direction: column; overflow: hidden; }
.tools { flex: none; height: 57px; padding-top: 5px; color: #a6a6a6; overflow: hidden; }
.line { display: flex; align-items: center; height: 24px; white-space: nowrap; }
.t { position: relative; flex: none; width: 32px; height: 24px; display: flex; align-items: center; justify-content: center; }
.t svg { width: 16px; height: 16px; }
.t .dn { width: 6px; height: 4px; margin-left: 6px; }
.t.dd { width: 35px; padding-left: 1px; }
.t.tx { width: auto; padding: 0 4px; gap: 4px; }
.t.tx svg { width: 14px; height: 14px; }
.t.tx .dn { width: 6px; height: 4px; margin-left: 3px; }
.t.tx.wide { padding-left: 9px; padding-right: 9px; }
.t.tx.wide + .wide { padding-left: 8px; padding-right: 2px; }
.t.tx.date { padding-left: 8px; }
.t .new { left: 18px; top: -1px; opacity: .5; }
.combo.font { width: 75px; height: 20px; margin: 0 8px; }
.combo.size { width: 50px; height: 20px; margin: 0 8px; }
.line .drop { color: #aaa; }

/* Worksheet */
.sheetwrap { flex: 1; min-height: 0; overflow: hidden; background: #efefef; padding-right: 15px; border-top: 1px solid #666; }
.sheet { width: 100%; table-layout: fixed; border-collapse: separate; border-spacing: 0; font-size: 13px; line-height: 18px; color: #000; }
.cn { width: 34px; }
.cg { width: 5px; }
.cb { width: 17px; }
.ce { width: 4px; }
.sheet td, .sheet th { padding: 0; text-align: center; white-space: nowrap; }
.sheet td { background: #e0e0e0; }
.sheet th { background: #efefef; border-right: 2px solid #1c1c1c; border-bottom: 1px solid #aca899; border-top: 1px solid #fff; font: bold 14px/14px "Liberation Serif", serif; }
.sheet .heads th { height: 19px; border: 0; border-right: 1px solid #999; border-bottom: 1px solid #999; font: 12px/12px "Liberation Serif", serif; -webkit-text-stroke: .2px #000; overflow: hidden; }
.sheet .heads th:nth-child(2) { border-right: 0; }
.heads div { height: 18px; overflow: hidden; display: flex; align-items: center; justify-content: center; }
.corner svg { width: 12px; height: 12px; margin: 6px 0 0 auto; }
.top .gap { background: #e4e4e4; border-right: 3px solid #1c1c1c; }
.r1 { height: 5px; line-height: 0; }
.r2 { height: 22px; }
.r3 { height: 60px; }
.r4 { height: 46px; }
.r4 td { border-bottom: 2px solid #000; }
.r4 td.gap, .r4 td:last-child { border-bottom: 0; }
.sheet .code { text-align: right; padding-right: 3px; }
.r2 .code { padding-top: 3px; }
.sheet .title { font-size: 24px; line-height: 32px; padding-bottom: 3px; }
.sheet .pink { background: #ee82ee; text-align: left; padding-left: 30px; font-feature-settings: normal; }
.info tr { height: 38px; }
.list tr { height: 35px; }
.info td, .list td { border-right: 1px solid #000; border-bottom: 1px solid #000; }
.sheet .info td, .sheet .list td { padding-bottom: 2px; }
.info td.gap, .list td.gap { background: #fff; border-bottom: 0; }
.sheet td.edge { border: 0; }
.sheet td.end { border-right-width: 2px; }
.sheet td.y { background: #ffffa6; }
.sheet td.w { background: #fff; }
.sheet td.l { text-align: left; padding-left: 3px; }
```
